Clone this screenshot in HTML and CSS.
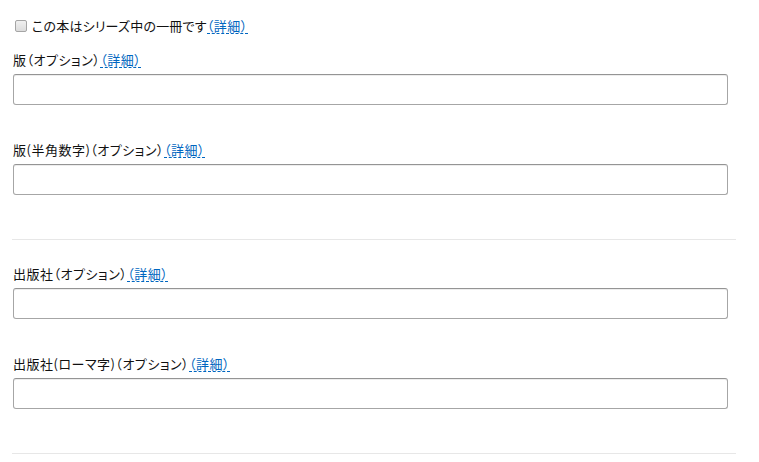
FILE: index.html
```html
<!DOCTYPE html>
<html lang="ja">
<head>
<meta charset="utf-8">
<link rel="stylesheet" href="styles.css">
</head>
<body>
<div class="form">
  <section class="group first">
    <label class="check-row">
      <input type="checkbox" class="check">
      <span class="check-text">この本はシリーズ中の一冊です</span>
      <a class="info">（詳細）</a>
    </label>
    <div class="field">
      <div class="label">版（オプション）<a class="info">（詳細）</a></div>
      <input type="text" class="text-input">
    </div>
    <div class="field">
      <div class="label">版(半角数字)（オプション）<a class="info">（詳細）</a></div>
      <input type="text" class="text-input">
    </div>
  </section>
  <section class="group">
    <div class="field">
      <div class="label">出版社（オプション）<a class="info">（詳細）</a></div>
      <input type="text" class="text-input">
    </div>
    <div class="field">
      <div class="label">出版社(ローマ字)（オプション）<a class="info">（詳細）</a></div>
      <input type="text" class="text-input">
    </div>
  </section>
</div>
</body>
</html>
```

FILE: styles.css
```css
html, body {
  margin: 0;
  padding: 0;
  background: #ffffff;
}
body {
  font-family: "Noto Sans CJK JP", "Noto Sans", sans-serif;
  font-size: 13px;
  color: #111111;
  font-feature-settings: "palt";
  letter-spacing: 0.5px;
}
.form {
  width: 724px;
  padding-left: 12px;
}
.group {
  padding-top: 25px;
  padding-bottom: 44px;
  border-bottom: 1px solid #e7e7e7;
  display: flex;
  flex-direction: column;
  gap: 36px;
}
.group.first {
  padding-top: 17px;
}
.check-row {
  display: flex;
  align-items: center;
  line-height: 18px;
  margin-bottom: -20px;
  padding-left: 3px;
}
.check {
  appearance: none;
  -webkit-appearance: none;
  width: 12px;
  height: 12px;
  margin: 0 5px 0 0;
  border: 1px solid #a5a5a5;
  border-radius: 2px;
  background: linear-gradient(#f0f0f0, #dcdcdc);
  box-sizing: border-box;
}
.check-text {
  letter-spacing: 0.2px;
}
.info {
  color: #0066c0;
  border-bottom: 1px dashed #0066c0;
  line-height: 14px;
  display: inline-block;
  cursor: pointer;
}
.field {
  display: flex;
  flex-direction: column;
}
.label {
  line-height: 18px;
  margin-bottom: 5px;
  padding-left: 1px;
}
.text-input {
  width: 715px;
  height: 31px;
  margin: 0 0 0 1px;
  box-sizing: border-box;
  border: 1px solid #a6a6a6;
  border-top-color: #949494;
  border-radius: 3px;
  background: #ffffff;
  box-shadow: 0 1px 0 rgba(255,255,255,0.5), 0 1px 0 rgba(0,0,0,0.07) inset;
  font: inherit;
}
```
